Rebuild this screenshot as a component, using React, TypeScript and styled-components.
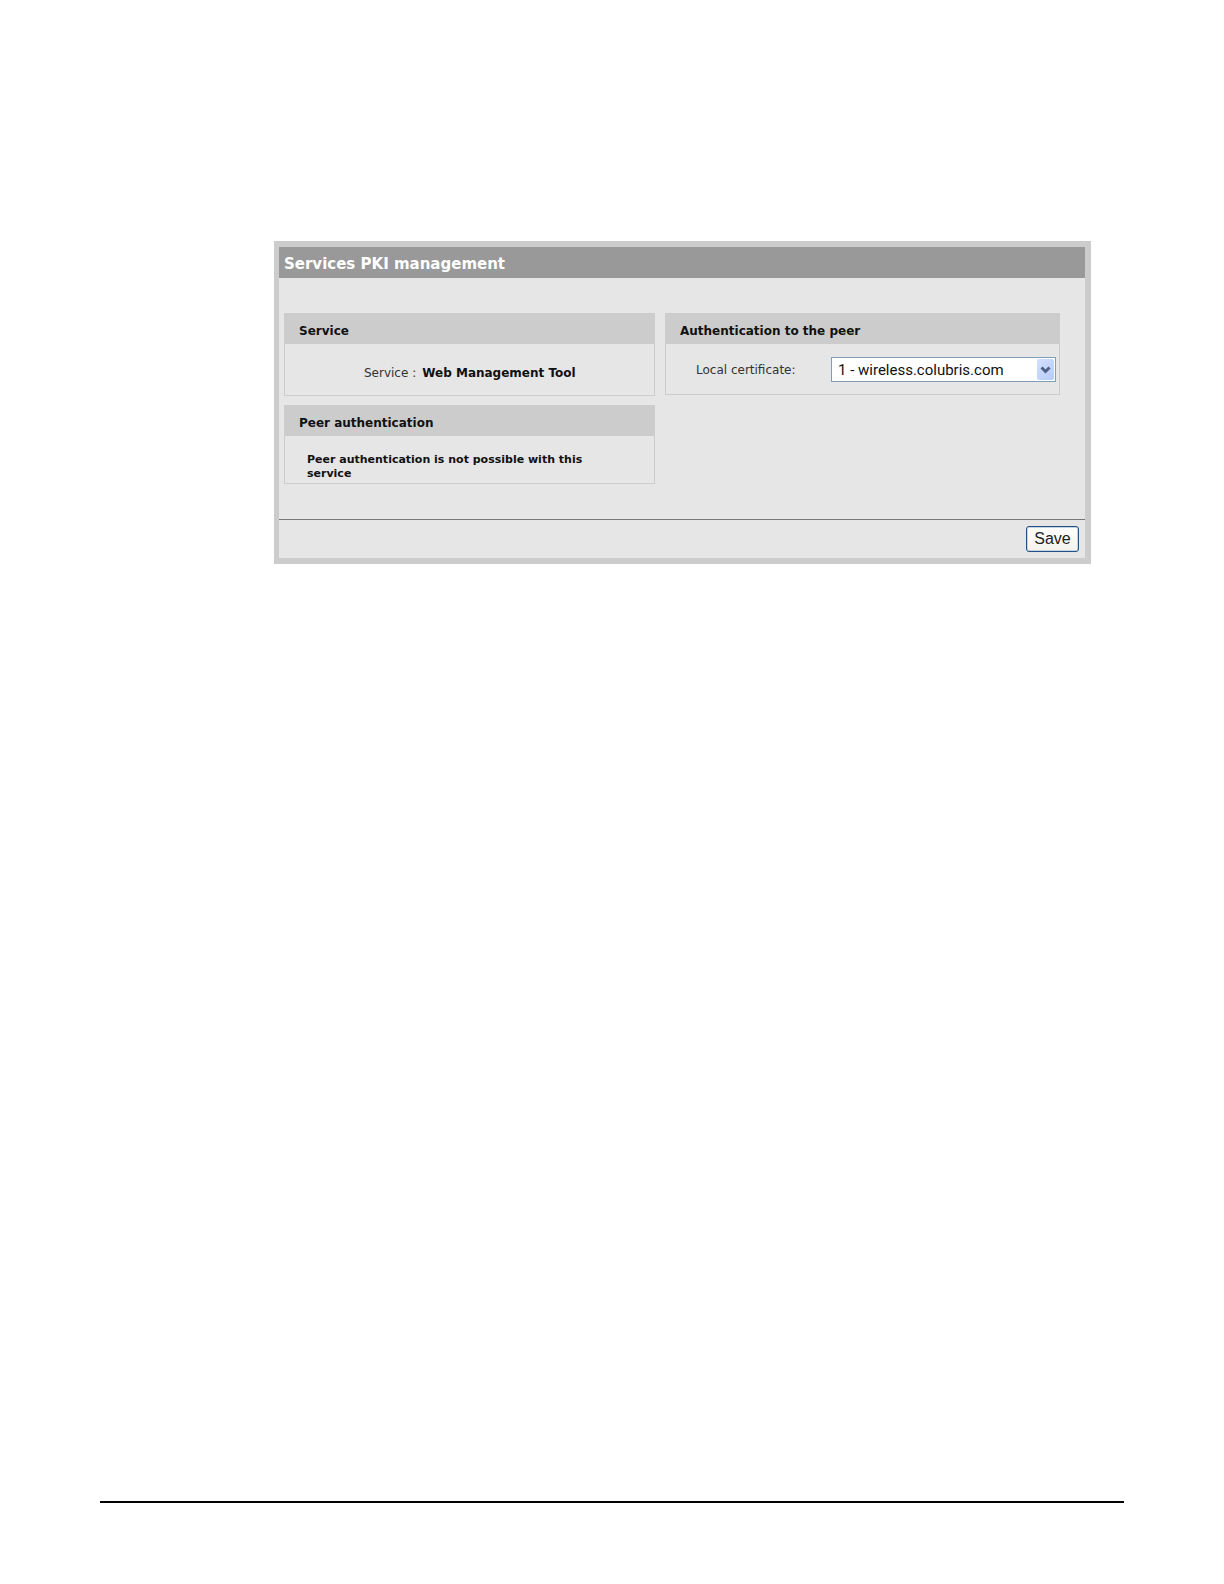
import styled, { createGlobalStyle } from 'styled-components'
import { FormEvent, useState } from 'react'

const certificates = ['1 - wireless.colubris.com']

function App() {

  const [certificate, setCertificate] = useState(certificates[0])

  const onSubmitHandler = (e: FormEvent<HTMLFormElement>) => {
    e.preventDefault()
  }

  return (
    <Page>
      <GlobalStyle />
      <Window onSubmit={onSubmitHandler}>
        <Title>Services PKI management</Title>
        <Content>
          <Column $grow={371}>
            <Panel>
              <PanelTitle>Service</PanelTitle>
              <ServiceRow>
                <Label as="span">Service :</Label>
                <Value>Web Management Tool</Value>
              </ServiceRow>
            </Panel>
            <Panel>
              <PanelTitle>Peer authentication</PanelTitle>
              <Message>Peer authentication is not possible with this service</Message>
            </Panel>
          </Column>
          <Column $grow={395}>
            <Panel>
              <PanelTitle>Authentication to the peer</PanelTitle>
              <CertificateRow>
                <Label htmlFor="certificate">Local certificate:</Label>
                <SelectBox>
                  <Select id="certificate" value={certificate} onChange={(e) => setCertificate(e.target.value)}>
                    {certificates.map((c) => <option key={c} value={c}>{c}</option>)}
                  </Select>
                  <Arrow>
                    <svg width="11" height="8" viewBox="0 0 11 8" aria-hidden="true">
                      <path d="M1.5 1.5 L5.5 5.5 L9.5 1.5" fill="none" stroke="#4d6185" strokeWidth="3" />
                    </svg>
                  </Arrow>
                </SelectBox>
              </CertificateRow>
            </Panel>
          </Column>
        </Content>
        <Footer>
          <SaveButton type="submit">Save</SaveButton>
        </Footer>
      </Window>
      <PageRule />
    </Page>
  )
}

const GlobalStyle = createGlobalStyle`
  * {
    box-sizing: border-box;
  }
  body {
    margin: 0;
    background: #fff;
    color: #111;
    font-family: Verdana, 'DejaVu Sans', sans-serif;
    font-size: 12px;
  }
`
const Page = styled.main`
  min-height: 100vh;
  padding: 241px 100px 81px;
  display: flex;
  flex-direction: column;
`
const Window = styled.form`
  margin: 0 33px 0 174px;
  border: solid #ccc;
  border-width: 6px 6px 6px 5px;
  background: #e6e6e6;
`
const Title = styled.h1`
  margin: 0;
  padding: 3px 5px 0;
  background: #999;
  color: #fff;
  font-size: 15px;
  font-weight: bold;
  line-height: 28px;
`
const Content = styled.div`
  padding: 35px 25px 35px 5px;
  display: flex;
  align-items: flex-start;
  gap: 10px;
`
const Column = styled.div<{ $grow: number }>`
  flex: ${({ $grow }) => $grow} 1 0;
  min-width: 0;
  display: flex;
  flex-direction: column;
  gap: 9px;
`
const Panel = styled.section`
  border: 1px solid #ccc;
`
const PanelTitle = styled.h2`
  margin: 0;
  padding: 4px 14px 0;
  background: #ccc;
  font-size: 12px;
  font-weight: bold;
  line-height: 26px;
`
const ServiceRow = styled.div`
  padding: 22px 20px 14px 79px;
  display: flex;
  gap: 6px;
  line-height: 15px;
`
const CertificateRow = styled.div`
  padding: 13px 3px 12px 30px;
  display: flex;
  justify-content: space-between;
  align-items: center;
`
const Label = styled.label`
  color: #333;
`
const Value = styled.strong`
  font-weight: bold;
`
const Message = styled.p`
  margin: 0;
  padding: 17px 40px 2px 22px;
  font-size: 11px;
  font-weight: bold;
  line-height: 14px;
`
const SelectBox = styled.div`
  position: relative;
  flex: 0 0 225px;
`
const Select = styled.select`
  display: block;
  width: 100%;
  height: 25px;
  padding: 0 20px 0 6px;
  appearance: none;
  border: 1px solid #7f9db9;
  border-radius: 0;
  background: #fff;
  color: #111;
  font-family: Roboto, 'Liberation Sans', sans-serif;
  font-size: 15px;
`
const Arrow = styled.span`
  position: absolute;
  top: 2px;
  right: 2px;
  bottom: 2px;
  width: 17px;
  display: flex;
  align-items: center;
  justify-content: center;
  border-radius: 2px;
  background: linear-gradient(135deg, #d3e0fd, #b5cbf8);
  pointer-events: none;
`
const Footer = styled.div`
  padding: 6px;
  display: flex;
  justify-content: flex-end;
  border-top: 1px solid #777;
`
const SaveButton = styled.button`
  width: 53px;
  height: 26px;
  padding: 0;
  border: 1px solid #245082;
  border-radius: 3px;
  background: linear-gradient(#fff, #f3f2ec);
  box-shadow: inset 0 0 0 1px #c3d3e6;
  color: #222;
  font-family: 'Liberation Sans', Arial, sans-serif;
  font-size: 16px;
`
const PageRule = styled.hr`
  width: 100%;
  height: 2px;
  margin: auto 0 0;
  border: 0;
  background: #000;
`
export default App;
